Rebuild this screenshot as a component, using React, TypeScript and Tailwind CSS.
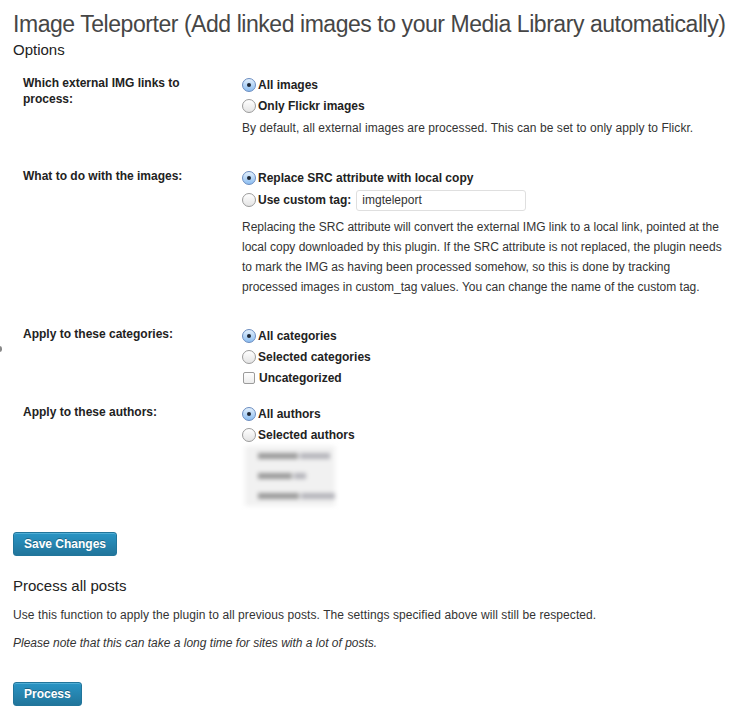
import React from "react";

const font = { fontFamily: '"Liberation Sans", Arial, sans-serif' };

function Radio({ checked }: { checked?: boolean }) {
  return checked ? (
    <span className="inline-flex items-center justify-center w-[14px] h-[14px] rounded-full border border-[#6a8cc0] bg-gradient-to-b from-[#e3f0fc] to-[#8cbdf0] shrink-0">
      <span className="w-[4px] h-[4px] rounded-full bg-[#1d2633]" />
    </span>
  ) : (
    <span className="inline-block w-[14px] h-[14px] rounded-full border border-[#9b9b9b] bg-gradient-to-b from-[#ffffff] to-[#e4e4e4] shrink-0" />
  );
}

function Option({ checked, label }: { checked?: boolean; label: string }) {
  return (
    <div className="flex items-center h-[21px] gap-[2px]">
      <Radio checked={checked} />
      <span className="font-bold text-[12px] text-[#222]">{label}</span>
    </div>
  );
}

function Row({ label, children, className }: { label: React.ReactNode; children: React.ReactNode; className?: string }) {
  return (
    <div className={"grid grid-cols-[229px_1fr] " + (className ?? "")}>
      <div className="pl-[10px] font-bold text-[12px] leading-[16px] text-[#222] pt-[1px]">{label}</div>
      <div>{children}</div>
    </div>
  );
}

function WpButton({ children }: { children: React.ReactNode }) {
  return (
    <button className="h-[24px] px-[10px] rounded-[3px] border border-[#21759b] bg-gradient-to-b from-[#2a95c5] to-[#21759b] text-white font-bold text-[12px] [text-shadow:0_-1px_0_rgba(0,0,0,0.3)] shadow-[inset_0_1px_0_rgba(120,200,230,0.5)]">
      {children}
    </button>
  );
}

export default function App() {
  return (
    <div className="relative bg-white w-[750px] h-[726px] pl-[13px] text-[#333] overflow-hidden" style={font}>
      <span className="absolute left-[-3px] top-[346px] w-[5px] h-[6px] rounded-full bg-[#888]" />
      <h2 className="pt-[10px] text-[23px] leading-[28px] text-[#464646] font-normal whitespace-nowrap tracking-[-0.45px]">
        Image Teleporter (Add linked images to your Media Library automatically)
      </h2>
      <h3 className="mt-[2px] text-[15px] leading-[20px] text-[#222]">Options</h3>

      <Row label={<>Which external IMG links to<br />process:</>} className="mt-[14px]">
        <Option checked label="All images" />
        <Option label="Only Flickr images" />
        <p className="mt-[2px] text-[12px] leading-[20px] tracking-[0.06px]">
          By default, all external images are processed. This can be set to only apply to Flickr.
        </p>
      </Row>

      <Row label="What to do with the images:" className="mt-[29px]">
        <Option checked label="Replace SRC attribute with local copy" />
        <div className="flex items-center h-[22px] gap-[2px] mt-[1px]">
          <Radio />
          <span className="font-bold text-[12px] text-[#222]">Use custom tag:</span>
          <input
            defaultValue="imgteleport"
            className="ml-[3px] w-[170px] h-[21px] px-[5px] rounded-[3px] border border-[#dfdfdf] text-[12px] text-[#333] outline-none"
            style={font}
          />
        </div>
        <p className="mt-[6px] text-[12px] leading-[20px] w-[484px]">
          Replacing the SRC attribute will convert the external IMG link to a local link, pointed at the local copy
          downloaded by this plugin. If the SRC attribute is not replaced, the plugin needs to mark the IMG as having
          been processed somehow, so this is done by tracking processed images in custom_tag values. You can change the
          name of the custom tag.
        </p>
      </Row>

      <Row label="Apply to these categories:" className="mt-[28px]">
        <Option checked label="All categories" />
        <Option label="Selected categories" />
        <div className="flex items-center h-[21px] gap-[4px] pl-[1px]">
          <span className="w-[12px] h-[12px] rounded-[2px] border border-[#9b9b9b] bg-gradient-to-b from-white to-[#ececec]" />
          <span className="font-bold text-[12px] text-[#222]">Uncategorized</span>
        </div>
      </Row>

      <Row label="Apply to these authors:" className="mt-[15px]">
        <Option checked label="All authors" />
        <Option label="Selected authors" />
        <div className="blur-[2px] mt-[1px] ml-[3px]">
          {[
            ["w-[40px]", "w-[30px]"],
            ["w-[34px]", "w-[12px]"],
            ["w-[42px]", "w-[34px]"],
          ].map(([a, b], i) => (
            <div key={i} className="flex items-center h-[20px] gap-[2px] bg-[#f1f1f1] w-[90px] pl-[13px]">
              <span className={"h-[6px] bg-[#999] " + a} />
              <span className={"h-[6px] bg-[#b4b4ba] " + b} />
            </div>
          ))}
        </div>
      </Row>

      <div className="mt-[25px]">
        <WpButton>Save Changes</WpButton>
      </div>

      <h3 className="mt-[20px] text-[15px] leading-[20px] text-[#222]">Process all posts</h3>
      <p className="mt-[9px] text-[12px] leading-[20px] tracking-[0.08px]">
        Use this function to apply the plugin to all previous posts. The settings specified above will still be respected.
      </p>
      <p className="mt-[8px] text-[12px] leading-[20px] italic">
        Please note that this can take a long time for sites with a lot of posts.
      </p>
      <div className="mt-[28px]">
        <WpButton>Process</WpButton>
      </div>
    </div>
  );
}
